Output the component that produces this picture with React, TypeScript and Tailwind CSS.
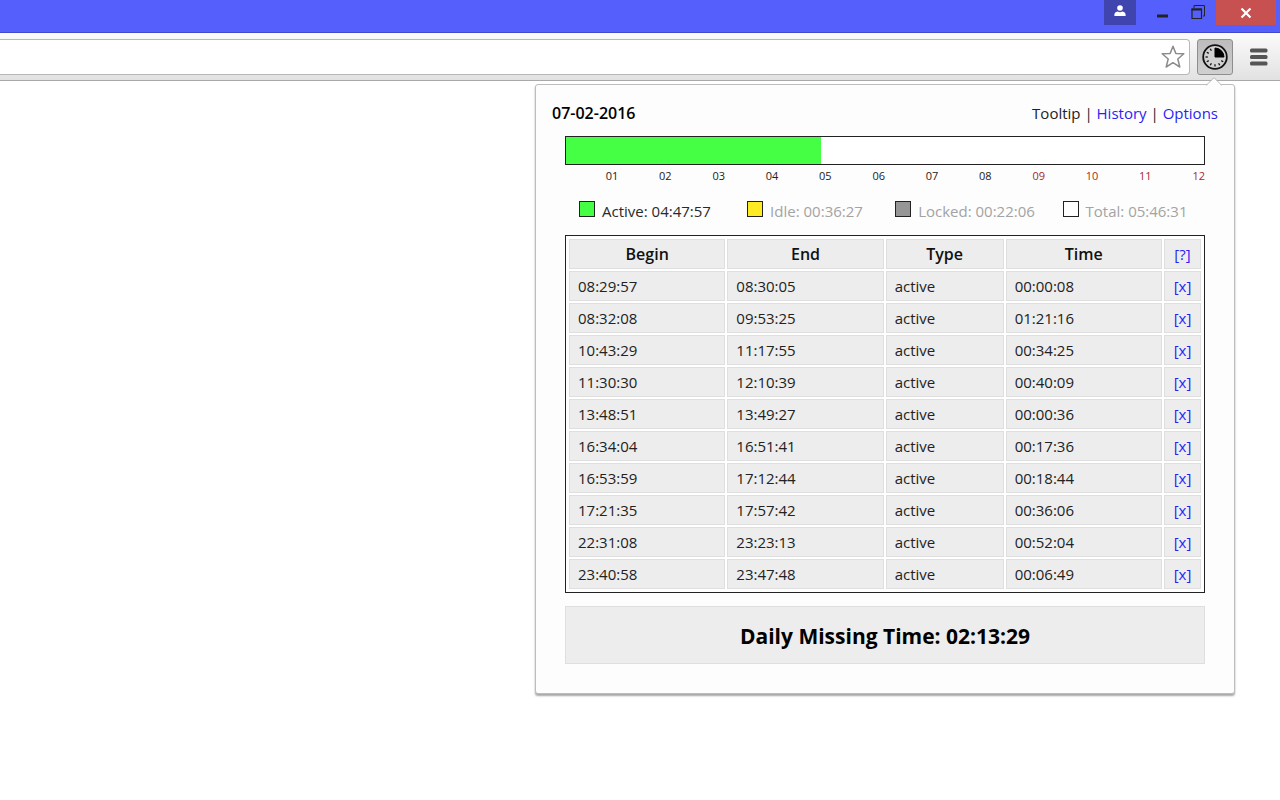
import { clsx } from "clsx";

interface Interval {
  begin: string;
  end: string;
  type: string;
  time: string;
}

interface LegendEntry {
  label: string;
  time: string;
  swatch: string;
  text: string;
}

const INTERVALS: Interval[] = [
  { begin: "08:29:57", end: "08:30:05", type: "active", time: "00:00:08" },
  { begin: "08:32:08", end: "09:53:25", type: "active", time: "01:21:16" },
  { begin: "10:43:29", end: "11:17:55", type: "active", time: "00:34:25" },
  { begin: "11:30:30", end: "12:10:39", type: "active", time: "00:40:09" },
  { begin: "13:48:51", end: "13:49:27", type: "active", time: "00:00:36" },
  { begin: "16:34:04", end: "16:51:41", type: "active", time: "00:17:36" },
  { begin: "16:53:59", end: "17:12:44", type: "active", time: "00:18:44" },
  { begin: "17:21:35", end: "17:57:42", type: "active", time: "00:36:06" },
  { begin: "22:31:08", end: "23:23:13", type: "active", time: "00:52:04" },
  { begin: "23:40:58", end: "23:47:48", type: "active", time: "00:06:49" },
];

const LEGEND: LegendEntry[] = [
  { label: "Active", time: "04:47:57", swatch: "bg-[#44ff44]", text: "text-[#2a2a2a]" },
  { label: "Idle", time: "00:36:27", swatch: "bg-[#ffeb22]", text: "text-[#a3a3a3]" },
  { label: "Locked", time: "00:22:06", swatch: "bg-[#969696]", text: "text-[#a3a3a3]" },
  { label: "Total", time: "05:46:31", swatch: "bg-white", text: "text-[#a3a3a3]" },
];

const HOURS = Array.from({ length: 12 }, (_, i) => i + 1);
const WORKDAY_HOURS = 8;
const ACTIVE_HOURS = 4 + 47 / 60 + 57 / 3600;

export default function App() {
  return (
    <div className="flex min-h-screen flex-col bg-white font-['Open_Sans','Noto_Sans',sans-serif] text-[15px] leading-5 text-[#222]">
      <TitleBar />
      <Toolbar />
      <main className="flex justify-end pt-[3px] pr-[45px]">
        <Popup />
      </main>
    </div>
  );
}

function TitleBar() {
  return (
    <header className="flex h-[33px] items-start justify-end border-b border-[#4347cc] bg-[#5560fc] pr-1">
      <button
        aria-label="Profile"
        className="flex h-[25px] w-8 items-center justify-center bg-[#4044ae]"
      >
        <svg className="mb-1 h-3 w-3" viewBox="0 0 12 12" fill="#fff">
          <circle cx="6" cy="3" r="2.8" />
          <path d="M.4 11V9.500C.4 7.500 2.500 6.500 3.800 6.500c1.200 1 3.200 1 4.400 0 1.300 0 3.400 1 3.400 3V11z" />
        </svg>
      </button>
      <button
        aria-label="Minimize"
        className="ml-2 flex h-[25px] w-9 items-center justify-center"
      >
        <svg className="h-[15px] w-[15px]" viewBox="0 0 15 15" fill="#222">
          <path d="M2 9.500h11v3H2z" />
        </svg>
      </button>
      <button
        aria-label="Restore"
        className="flex h-[25px] w-9 items-center justify-center"
      >
        <svg
          className="h-[15px] w-[15px]"
          viewBox="0 0 15 15"
          fill="none"
          stroke="#222"
        >
          <path d="M3 3V.5h10.500V11H12" />
          <path d="M1 4h9.500v9.500H1z" strokeWidth="1.200" />
          <path d="M.5 4.500h10.500" strokeWidth="2" />
        </svg>
      </button>
      <button
        aria-label="Close"
        className="flex h-[25px] w-[60px] items-center justify-center bg-[#c75050]"
      >
        <svg
          className="h-3 w-3"
          viewBox="0 0 12 12"
          stroke="#fff"
          strokeWidth="2.200"
        >
          <path d="M1.500 1.500l9 9M10.500 1.500l-9 9" />
        </svg>
      </button>
    </header>
  );
}

function Toolbar() {
  return (
    <div className="flex h-12 items-center border-b border-[#a9a9a9] bg-linear-to-b from-[#fbfbfb] to-[#e2e2e2] pr-3">
      <div className="flex h-9 flex-1 items-center rounded-r-sm border-y border-r border-[#b8b8b8] bg-white pr-1">
        <input
          aria-label="Address"
          className="min-w-0 flex-1 bg-transparent px-2 outline-none"
        />
        <button aria-label="Bookmark this page">
          <StarIcon />
        </button>
      </div>
      <button
        aria-label="Time tracker"
        className="ml-[7px] flex h-9 w-9 items-center justify-center rounded-[3px] border border-[#8e8e8e] bg-linear-to-b from-[#bcbcbc] to-[#d0d0d0]"
      >
        <ClockIcon />
      </button>
      <button aria-label="Menu" className="ml-4">
        <svg className="h-[20px] w-[19px]" viewBox="0 0 19 20" fill="#555">
          <rect x="1" y="1.500" width="17.500" height="4" rx="1.500" />
          <rect x="1" y="8" width="17.500" height="4" rx="1.500" />
          <rect x="1" y="14.500" width="17.500" height="4" rx="1.500" />
        </svg>
      </button>
    </div>
  );
}

function StarIcon() {
  return (
    <svg
      className="h-6 w-6"
      viewBox="0 0 24 24"
      fill="none"
      stroke="#8c8c8c"
      strokeWidth="1.500"
      strokeLinejoin="round"
    >
      <path d="M12 1.300l2.800 7.100 8 .4-6 5.200 2 8-6.800-4.300L5.200 22l2-8-6-5.200 8-.4z" />
    </svg>
  );
}

function ClockIcon() {
  const ticks = [120, 150, 180, 210, 240, 270, 300, 330];

  return (
    <svg className="h-[26px] w-[26px] shrink-0" viewBox="0 0 26 26">
      <circle cx="13" cy="13" r="11.800" fill="#d2d2d2" stroke="#111" strokeWidth="1.800" />
      <path d="M13 13V4a9 9 0 0 1 9 9z" fill="#000" stroke="#000" />
      {ticks.map((angle) => (
        <path
          key={angle}
          d="M13 3.500v2.300"
          stroke="#111"
          strokeWidth="1.300"
          transform={`rotate(${angle} 13 13)`}
        />
      ))}
    </svg>
  );
}

function Popup() {
  return (
    <section className="relative w-[700px] max-w-full rounded-[3px] border border-[#bdbdbd] bg-[#fdfdfd] px-4 pt-[18px] pb-[29px] shadow-[0_2px_2px_rgba(0,0,0,0.35)]">
      <svg
        className="absolute -top-2 right-3 h-[9px] w-4"
        viewBox="0 0 16 9"
        fill="#fdfdfd"
      >
        <path d="M0 9l8-8 8 8z" />
        <path d="M0 8.500L8 .7l8 7.800" fill="none" stroke="#bdbdbd" />
      </svg>
      <div className="flex items-center justify-between">
        <h1 className="text-base leading-5 font-semibold text-black">
          07-02-2016
        </h1>
        <nav>
          Tooltip |{" "}
          <a href="#history" className="text-[#2a1ff5]">
            History
          </a>{" "}
          |{" "}
          <a href="#options" className="text-[#2a1ff5]">
            Options
          </a>
        </nav>
      </div>
      <div className="mx-[13px] mt-[13px]">
        <Timeline />
        <Legend />
        <IntervalTable />
        <div className="mt-[13px] border border-[#dfdfdf] bg-[#ededed] pt-[15px] pb-[13px] text-center text-[21px] leading-7 font-bold text-black">
          Daily Missing Time: 02:13:29
        </div>
      </div>
    </section>
  );
}

function Timeline() {
  return (
    <>
      <div className="h-[29px] border border-[#222] bg-white">
        <div
          className="h-full bg-[#44ff44]"
          style={{ width: `${(ACTIVE_HOURS / HOURS.length) * 100}%` }}
        />
      </div>
      <ol className="grid grid-cols-12 text-right text-[11px] leading-[22px]">
        {HOURS.map((hour) => (
          <li
            key={hour}
            className={clsx(hour > WORKDAY_HOURS && "text-[#a52a2a]")}
          >
            {String(hour).padStart(2, "0")}
          </li>
        ))}
      </ol>
    </>
  );
}

function Legend() {
  return (
    <ul className="mt-[14px] grid grid-cols-4">
      {LEGEND.map((entry) => (
        <li
          key={entry.label}
          className={clsx("flex items-center justify-center gap-[7px]", entry.text)}
        >
          <span className={clsx("mb-1 h-4 w-4 border border-[#222]", entry.swatch)} />
          <span>
            {entry.label}: {entry.time}
          </span>
        </li>
      ))}
    </ul>
  );
}

function IntervalTable() {
  const cell = "h-[30px] border border-[#dfdfdf] bg-[#ededed]";

  return (
    <table className="mt-[14px] w-full table-fixed border-separate border-spacing-[2px] border border-[#222] bg-white p-px">
      <colgroup>
        <col />
        <col />
        <col className="w-[118px]" />
        <col />
        <col className="w-[37px]" />
      </colgroup>
      <thead className="text-[#111]">
        <tr>
          {["Begin", "End", "Type", "Time"].map((title) => (
            <th key={title} className={clsx(cell, "text-base leading-5 font-semibold")}>
              {title}
            </th>
          ))}
          <th className={clsx(cell, "font-normal")}>
            <a href="#help" className="text-[#2a1ff5]">
              [?]
            </a>
          </th>
        </tr>
      </thead>
      <tbody>
        {INTERVALS.map((row) => (
          <tr key={row.begin}>
            <td className={clsx(cell, "px-2")}>{row.begin}</td>
            <td className={clsx(cell, "px-2")}>{row.end}</td>
            <td className={clsx(cell, "px-2")}>{row.type}</td>
            <td className={clsx(cell, "px-2")}>{row.time}</td>
            <td className={clsx(cell, "text-center")}>
              <a href="#remove" className="text-[#2a1ff5]">
                [x]
              </a>
            </td>
          </tr>
        ))}
      </tbody>
    </table>
  );
}
